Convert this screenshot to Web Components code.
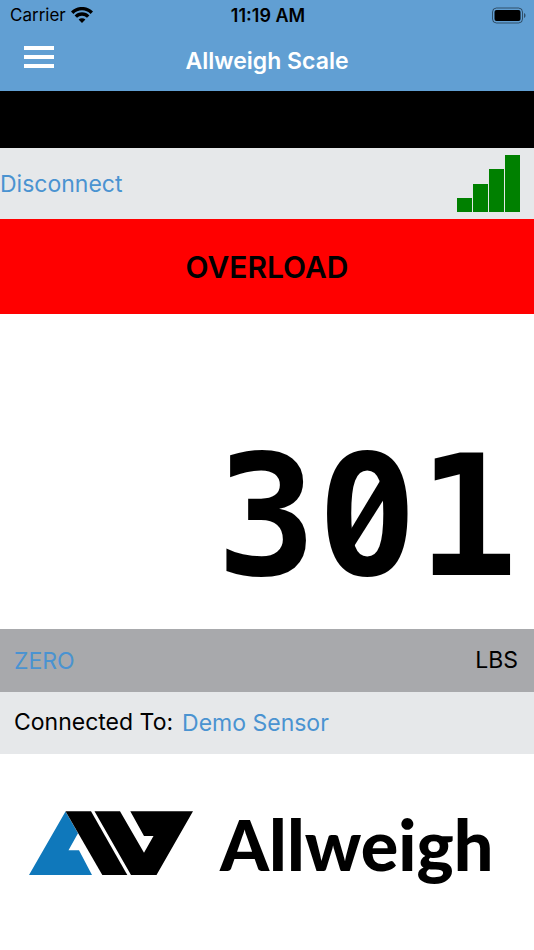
<!DOCTYPE html>
<html lang="en">
<head>
  <meta charset="utf-8">
  <meta name="viewport" content="width=device-width, initial-scale=1">
  <title>Allweigh Scale</title>
  <style>
    body {
      margin: 0;
      background-color: #fff;
      color: #000;
      font-family: Inter, "Liberation Sans", sans-serif;
      font-size: 23px;
      --header-color: #619fd3;
      --link-color: #4a93d1;
      --light-bar: #e6e8ea;
      --dark-bar: #a8a9ac;
      --alert-color: #ff0000;
      --signal-color: #008000;
      --logo-blue: #0f78bb;
    }
  </style>
</head>
<body>
  <scale-app></scale-app>

  <script>
    class StatusBar extends HTMLElement {
      constructor() {
        super();
        this.shadowDOM = this.attachShadow({ mode: 'open' });
      }

      connectedCallback() {
        this.render();
      }

      render() {
        this.shadowDOM.innerHTML = `
          <style>
            :host {
              display: grid;
              grid-template-columns: 1fr auto 1fr;
              align-items: center;
              height: 30px;
              padding: 0 8px 0 10px;
              font-size: 17px;
            }

            .carrier {
              display: flex;
              align-items: center;
              gap: 5px;
            }

            .time {
              font-size: 18px;
              font-weight: 600;
            }

            .battery {
              justify-self: end;
            }

            svg {
              display: block;
            }
          </style>

          <div class="carrier">
            <span>Carrier</span>
            <svg width="22" height="16" viewBox="0 0 22 16" aria-hidden="true">
              <g fill="none" stroke="#000" stroke-width="3.400">
                <path d="M1.2 5.700a13.800 13.800 0 0 1 19.600 0"/>
                <path d="M4.800 9.600a8.700 8.700 0 0 1 12.400 0"/>
              </g>
              <path d="M11 16 7.600 12.500a4.900 4.900 0 0 1 6.800 0z"/>
            </svg>
          </div>
          <span class="time">11:19 AM</span>
          <svg class="battery" width="35" height="17" viewBox="0 0 35 17" aria-hidden="true">
            <rect x="1.500" y="1" width="30" height="15" rx="4" fill="none" stroke="#000" stroke-opacity=".5"/>
            <rect x="3.500" y="3" width="26" height="11" rx="2"/>
            <path d="M33 6v5c1-.5 1.500-1.300 1.500-2.500s-.5-2-1.500-2.500z" opacity=".5"/>
          </svg>
        `;
      }
    }

    customElements.define('status-bar', StatusBar);

    class NavBar extends HTMLElement {
      constructor() {
        super();
        this.shadowDOM = this.attachShadow({ mode: 'open' });
      }

      connectedCallback() {
        this.render();
        this.shadowDOM.querySelector('button').addEventListener('click', () => {
          this.dispatchEvent(new CustomEvent('menu-open', { bubbles: true, composed: true }));
        });
      }

      render() {
        this.shadowDOM.innerHTML = `
          <style>
            :host {
              display: grid;
              grid-template-columns: 1fr auto 1fr;
              align-items: center;
              height: 61px;
              padding: 0 24px;
              color: #fff;
            }

            button {
              justify-self: start;
              display: flex;
              flex-direction: column;
              gap: 5px;
              width: 30px;
              padding: 0 0 7px;
              border: none;
              background: none;
              cursor: pointer;
            }

            button span {
              width: 100%;
              height: 4px;
              background-color: #fff;
            }

            h1 {
              margin: 0;
              font-size: 23px;
              font-weight: 600;
            }
          </style>

          <button type="button" aria-label="Menu">
            <span></span>
            <span></span>
            <span></span>
          </button>
          <h1><slot></slot></h1>
        `;
      }
    }

    customElements.define('nav-bar', NavBar);

    class SignalBars extends HTMLElement {
      constructor() {
        super();
        this.shadowDOM = this.attachShadow({ mode: 'open' });
      }

      connectedCallback() {
        this.render();
      }

      render() {
        this.shadowDOM.innerHTML = `
          <style>
            :host {
              display: flex;
              align-items: flex-end;
              gap: 1px;
              height: 57px;
            }

            span {
              width: 15px;
              background-color: var(--signal-color);
            }

            span:nth-of-type(1) { height: 25%; }
            span:nth-of-type(2) { height: 50%; }
            span:nth-of-type(3) { height: 75%; }
            span:nth-of-type(4) { height: 100%; }
          </style>

          <span></span>
          <span></span>
          <span></span>
          <span></span>
        `;
      }
    }

    customElements.define('signal-bars', SignalBars);

    class LinkButton extends HTMLElement {
      constructor() {
        super();
        this.shadowDOM = this.attachShadow({ mode: 'open' });
      }

      connectedCallback() {
        this.render();
      }

      render() {
        this.shadowDOM.innerHTML = `
          <style>
            :host {
              display: block;
            }

            button {
              display: block;
              padding: 0;
              border: none;
              background: none;
              color: var(--link-color);
              font: inherit;
              cursor: pointer;
            }
          </style>

          <button type="button"><slot></slot></button>
        `;
      }
    }

    customElements.define('link-button', LinkButton);

    class WeightDisplay extends HTMLElement {
      constructor() {
        super();
        this.shadowDOM = this.attachShadow({ mode: 'open' });
      }

      connectedCallback() {
        this.render();
      }

      // One slash for each zero, counted in character cells from the right
      renderSlashes() {
        const digits = this.getAttribute('value').split('').reverse();

        return digits.map((digit, index) => digit !== '0' ? '' : `
          <svg style="right: ${index}ch" viewBox="-50 -98 100 196" aria-hidden="true">
            <circle cy="-3" r="12" fill="#fff"/>
            <path d="M14.500-39-18 15-14 30.500 18-20z"/>
          </svg>
        `).join('');
      }

      render() {
        this.shadowDOM.innerHTML = `
          <style>
            :host {
              display: flex;
              justify-content: flex-end;
              align-items: flex-end;
              min-height: 315px;
              padding: 0 16px 14px;
              box-sizing: border-box;
              font-family: "DejaVu Sans Mono", monospace;
              font-size: 167px;
              font-weight: 700;
              line-height: 196px;
            }

            output {
              position: relative;
            }

            svg {
              position: absolute;
              top: 0;
              width: 1ch;
              height: 100%;
            }
          </style>

          <output>${this.getAttribute('value')}${this.renderSlashes()}</output>
        `;
      }
    }

    customElements.define('weight-display', WeightDisplay);

    class BrandLogo extends HTMLElement {
      constructor() {
        super();
        this.shadowDOM = this.attachShadow({ mode: 'open' });
      }

      connectedCallback() {
        this.render();
      }

      render() {
        this.shadowDOM.innerHTML = `
          <style>
            :host {
              display: flex;
              align-items: center;
              gap: 27px;
              padding: 39px 28px;
              font-family: Lato, "Open Sans", sans-serif;
              font-size: 70px;
              font-weight: 900;
              line-height: 98px;
            }

            svg {
              flex: none;
            }

            span {
              padding-top: 2px;
            }
          </style>

          <svg width="165" height="66" viewBox="0 0 165 66" aria-hidden="true">
            <path d="M1 65 37.500 1.500 50 23.300 40.500 40.300h10.500L64 65z" fill="var(--logo-blue)"/>
            <path d="M37.500 1.300H63L99.300 65H74.300z"/>
            <path d="M66.500 1.300H92L116 42.700 125.500 26H116L102.300 1.300H165L128.500 65H103z"/>
          </svg>
          <span>Allweigh</span>
        `;
      }
    }

    customElements.define('brand-logo', BrandLogo);

    class ScaleApp extends HTMLElement {
      constructor() {
        super();
        this.shadowDOM = this.attachShadow({ mode: 'open' });
      }

      connectedCallback() {
        this.render();
      }

      render() {
        this.shadowDOM.innerHTML = `
          <style>
            :host {
              display: flex;
              flex-direction: column;
              min-height: 100vh;
            }

            header {
              background-color: var(--header-color);
            }

            .spacer {
              height: 57px;
              background-color: #000;
            }

            .row {
              display: flex;
              align-items: center;
              box-sizing: border-box;
            }

            .label {
              padding-bottom: 2px;
            }

            .connection {
              justify-content: space-between;
              height: 71px;
              padding-right: 14px;
              background-color: var(--light-bar);
            }

            .alert {
              justify-content: center;
              height: 95px;
              background-color: var(--alert-color);
              font-size: 30px;
              font-weight: 600;
            }

            .units {
              justify-content: space-between;
              height: 63px;
              padding: 0 16px 0 14px;
              background-color: var(--dark-bar);
            }

            .sensor {
              gap: 9px;
              height: 62px;
              padding: 0 14px;
              background-color: var(--light-bar);
            }
          </style>

          <header>
            <status-bar></status-bar>
            <nav-bar>Allweigh Scale</nav-bar>
          </header>
          <div class="spacer"></div>
          <main>
            <div class="row connection">
              <link-button>Disconnect</link-button>
              <signal-bars></signal-bars>
            </div>
            <div class="row alert" role="alert">OVERLOAD</div>
            <weight-display value="301"></weight-display>
            <div class="row units">
              <link-button>ZERO</link-button>
              <span class="label">LBS</span>
            </div>
            <div class="row sensor">
              <span class="label">Connected To:</span>
              <link-button>Demo Sensor</link-button>
            </div>
          </main>
          <brand-logo></brand-logo>
        `;
      }
    }

    customElements.define('scale-app', ScaleApp);
  </script>
</body>
</html>
